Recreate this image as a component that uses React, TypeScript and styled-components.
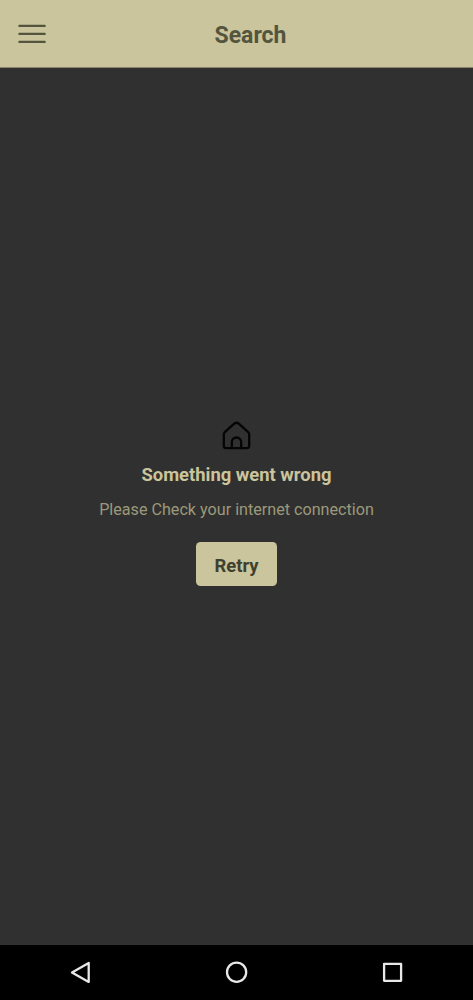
import React from 'react';
import styled, { createGlobalStyle } from 'styled-components';

const GlobalStyle = createGlobalStyle`
  body {
    margin: 0;
    background: #303030;
    font-family: Roboto, sans-serif;
  }
`;

const Screen = styled.div`
  display: flex;
  flex-direction: column;
  height: 1000px;
  background: #303030;
`;

const Header = styled.header`
  display: grid;
  grid-template-columns: 64px 1fr 64px;
  align-items: center;
  box-sizing: border-box;
  height: 68px;
  background: #cac59c;
  border-bottom: 1px solid #8a866a;
`;

const MenuButton = styled.button`
  display: flex;
  padding: 0 0 0 18px;
  border: 0;
  background: none;
`;

const Title = styled.h1`
  margin: 5px 0 0 28px;
  text-align: center;
  font-size: 23px;
  line-height: 28px;
  font-weight: 700;
  color: #54553f;
`;

const Content = styled.main`
  flex: 1;
  display: flex;
  flex-direction: column;
  align-items: center;
  padding-top: 353px;
`;

const Heading = styled.h2`
  margin: 12px 0 0;
  font-size: 18.4px;
  line-height: 24px;
  font-weight: 700;
  color: #cac59c;
`;

const Message = styled.p`
  margin: 13px 0 0;
  font-size: 16.15px;
  line-height: 20px;
  color: #9c997a;
`;

const RetryButton = styled.button`
  margin-top: 22.4px;
  width: 81px;
  height: 43.6px;
  padding: 3px 0 0;
  border: 0;
  border-radius: 4.5px;
  background: #cac59c;
  color: #3e412e;
  font: 700 18.4px/24px Roboto, sans-serif;
`;

const NavBar = styled.nav`
  display: grid;
  grid-template-columns: repeat(3, 156px);
  justify-content: center;
  justify-items: center;
  align-items: center;
  height: 55px;
  background: #000;
`;

export default function App() {
  return (
    <Screen>
      <GlobalStyle />
      <Header>
        <MenuButton aria-label="Menu">
          <svg width="28" height="20" viewBox="0 0 28 20" fill="none" stroke="#54553f" strokeWidth="2.3" strokeLinecap="round">
            <path d="M1.4 1.9h25.3M1.4 9.9h25.3M1.4 17.9h25.3" />
          </svg>
        </MenuButton>
        <Title>Search</Title>
      </Header>
      <Content>
        <svg width="30" height="30" viewBox="0 0 30 30" fill="none" stroke="#050505" strokeWidth="2.3" strokeLinecap="round" strokeLinejoin="round">
          <path d="M1.8 13.4Q1.8 12.1 2.8 11.2L12.2 2.6Q14.5 0.8 16.8 2.6L26.2 11.2Q27.2 12.1 27.2 13.4V24.8Q27.2 27.2 24.8 27.2H4.2Q1.8 27.2 1.8 24.8Z" />
          <path d="M9.8 27V21.2a4.7 4.7 0 0 1 9.4 0V27" />
        </svg>
        <Heading>Something went wrong</Heading>
        <Message>Please Check your internet connection</Message>
        <RetryButton>Retry</RetryButton>
      </Content>
      <NavBar>
        <svg width="24" height="24" viewBox="0 0 24 24" fill="none" stroke="#e8e8e8" strokeWidth="2.3" strokeLinejoin="round">
          <path d="M19.7 1.9V20.9L3 11.4Z" />
        </svg>
        <svg width="24" height="24" viewBox="0 0 24 24" fill="none" stroke="#e8e8e8" strokeWidth="2.3">
          <circle cx="11.6" cy="11.2" r="9.6" />
        </svg>
        <svg width="24" height="24" viewBox="0 0 24 24" fill="none" stroke="#e8e8e8" strokeWidth="2.3" strokeLinejoin="round">
          <rect x="3.1" y="2.8" width="17" height="17" />
        </svg>
      </NavBar>
    </Screen>
  );
}
